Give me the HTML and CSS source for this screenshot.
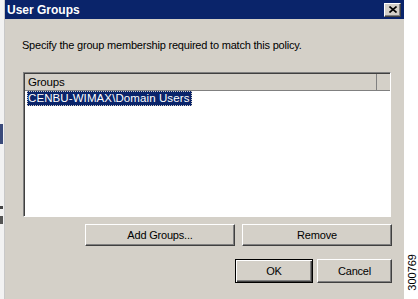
FILE: index.html
```html
<!DOCTYPE html>
<html lang="en">
<head>
    <meta charset="UTF-8">
    <title>User Groups</title>
    <link rel="stylesheet" href="styles.css">
</head>
<body>
<div class="page">
    <div class="edge">
        <span class="mark mark-a"></span>
        <span class="mark mark-b"></span>
        <span class="mark mark-c"></span>
    </div>

    <div class="dialog">
        <div class="titlebar">
            <span class="title">User Groups</span>
            <button class="close">
                <svg width="8" height="7" viewBox="0 0 8 7">
                    <path d="M0.5 0.5 L7.5 6.5 M7.5 0.5 L0.5 6.5" stroke="#000" stroke-width="1.6"/>
                </svg>
            </button>
        </div>

        <div class="content">
            <p class="intro">Specify the group membership required to match this policy.</p>

            <!-- Group list -->
            <div class="listbox">
                <div class="list-head">
                    <span class="col">Groups</span>
                    <span class="col-rest"></span>
                </div>
                <div class="list-row"><span class="selected">CENBU-WIMAX\Domain Users</span></div>
            </div>

            <div class="list-buttons">
                <button class="btn btn-wide">Add Groups...</button>
                <button class="btn btn-wide">Remove</button>
            </div>

            <div class="dialog-buttons">
                <button class="btn btn-ok">OK</button>
                <button class="btn btn-cancel">Cancel</button>
            </div>
        </div>
    </div>

    <div class="side">
        <span class="figno">300769</span>
    </div>
</div>
</body>
</html>
```

FILE: styles.css
```css
* {
    box-sizing: border-box;
}
body {
    margin: 0;
    background-color: #fff;
    font-family: 'Liberation Sans', Arial, sans-serif;
    overflow: hidden;
}
.page {
    display: flex;
    height: 299px;
    width: 418px;
}
.edge {
    position: relative;
    width: 5px;
    background: #f2f2f2;
    border-right: 1px solid #c8c8c8;
}
.mark {
    position: absolute;
    left: 0;
    width: 3px;
    background: #3a4a7a;
}
.mark-a { top: 124px; height: 20px; }
.mark-b { top: 206px; height: 3px; background: #444; }
.mark-c { top: 216px; height: 8px; background: #555; }

.dialog {
    width: 400px;
    display: flex;
    flex-direction: column;
    background: #d4d0c8;
}
.titlebar {
    height: 19px;
    background: #0a246a;
    display: flex;
    align-items: center;
    justify-content: space-between;
    padding: 0 3px 0 2px;
}
.title {
    color: #fff;
    font-weight: bold;
    font-size: 12px;
}
.close {
    width: 17px;
    height: 14px;
    padding: 0;
    display: flex;
    align-items: center;
    justify-content: center;
    background: #d4d0c8;
    border: 1px solid;
    border-color: #fff #404040 #404040 #fff;
    box-shadow: inset -1px -1px 0 #808080;
}
.content {
    flex: 1;
    padding: 0 12px 0 18px;
    display: flex;
    flex-direction: column;
    font-size: 11px;
    letter-spacing: -0.2px;
}
.intro {
    margin: 19px 0 0 -1px;
    color: #000;
    line-height: 14px;
}
.listbox {
    margin-top: 20px;
    height: 145px;
    margin-right: 1px;
    background: #fff;
    border: 1px solid;
    border-color: #808080 #fff #fff #808080;
    box-shadow: inset 1px 1px 0 #404040;
    padding: 1px 0 0 1px;
}
.list-head {
    display: flex;
    height: 17px;
    border-bottom: 1px solid #808080;
}
.col {
    width: 352px;
    background: #d4d0c8;
    border-right: 1px solid #808080;
    line-height: 16px;
    padding-left: 3px;
    font-size: 11.5px;
}
.col-rest {
    flex: 1;
    background: #d4d0c8;
}
.list-row {
    padding: 0 0 0 2px;
    height: 15px;
}
.selected {
    display: inline-block;
    background: #0a246a;
    color: #fff;
    font-size: 11.5px;
    letter-spacing: 0.1px;
    line-height: 15px;
    padding: 0 2px 0 1px;
    outline: 1px dotted #d4d0c8;
    outline-offset: -1px;
}
.btn {
    height: 22px;
    padding: 0;
    background: #d4d0c8;
    font-family: inherit;
    font-size: 11px;
    letter-spacing: -0.2px;
    color: #000;
    border: 1px solid;
    border-color: #fff #404040 #404040 #fff;
    box-shadow: inset -1px -1px 0 #808080;
}
.list-buttons {
    display: flex;
    justify-content: flex-end;
    gap: 7px;
    margin-top: 7px;
}
.btn-wide {
    width: 150px;
}
.dialog-buttons {
    display: flex;
    justify-content: flex-end;
    gap: 4px;
    margin-top: 13px;
}
.btn-ok {
    width: 78px;
    height: 24px;
    border: 1px solid #000;
    box-shadow: inset 1px 1px 0 #fff, inset -1px -1px 0 #404040, inset -2px -2px 0 #808080;
}
.btn-cancel {
    width: 75px;
    height: 24px;
}
.side {
    flex: 1;
    display: flex;
    flex-direction: column;
    justify-content: flex-end;
    align-items: center;
    padding: 0 0 8px 2px;
}
.figno {
    writing-mode: vertical-rl;
    transform: rotate(180deg);
    font-size: 11px;
    line-height: 12px;
    color: #000;
}
```
